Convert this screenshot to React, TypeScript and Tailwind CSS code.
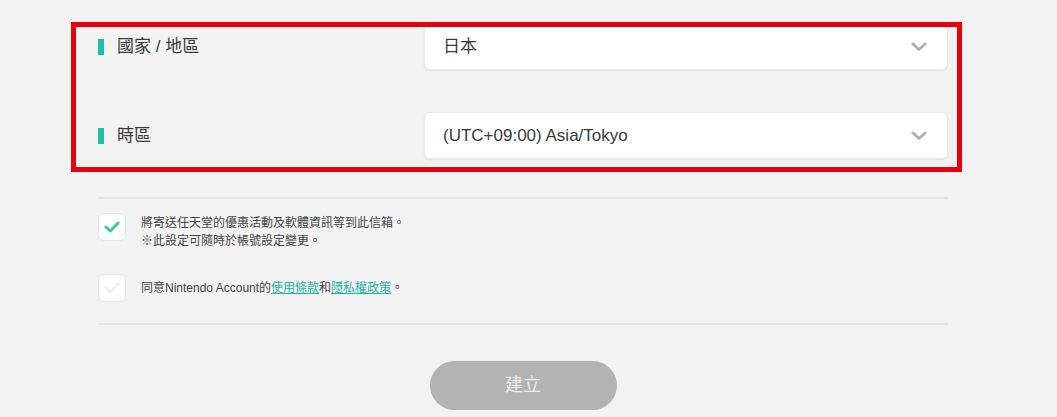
import React from "react";

const FONT = { fontFamily: '"Liberation Sans", Arial, "Noto Sans CJK TC", sans-serif' };

function Chevron() {
  return (
    <svg width="16" height="10" viewBox="0 0 16 10" className="shrink-0">
      <path d="M2 2 L8 7.5 L14 2" fill="none" stroke="#b0b0b0" strokeWidth="3" strokeLinecap="round" strokeLinejoin="round" />
    </svg>
  );
}

function FieldRow({ label, value, className = "" }: { label: string; value: string; className?: string }) {
  return (
    <div className={`flex items-center ${className}`}>
      <div className="flex w-[326px] items-center gap-[13px]">
        <span className="h-4 w-[6px] bg-[#1dbfaa]" />
        <span className="text-[17px] text-[#3a3a3a]">{label}</span>
      </div>
      <div className="flex h-[47px] flex-1 items-center justify-between rounded-md border border-[#e9e9e9] bg-white pl-[18px] pr-[20px] shadow-[0_1px_2px_rgba(0,0,0,0.08)]">
        <span className="text-[17px] text-[#3a3a3a]">{value}</span>
        <Chevron />
      </div>
    </div>
  );
}

function Checkbox({ checked }: { checked: boolean }) {
  return (
    <div className="flex h-[28px] w-[28px] shrink-0 items-center justify-center rounded-[6px] border border-[#e6e6e6] bg-white">
      <svg width="16" height="12" viewBox="0 0 16 12">
        <path
          d="M2 6 L6.2 10 L14 2"
          fill="none"
          stroke={checked ? "#3cc4b1" : "#f0f0f0"}
          strokeWidth="3"
          strokeLinecap="round"
          strokeLinejoin="round"
        />
      </svg>
    </div>
  );
}

export default function App() {
  return (
    <div className="relative h-[417px] w-full overflow-hidden bg-[#f2f2f2]" style={FONT}>
      <div className="ml-[98px] w-[850px] pt-[23px]">
        <FieldRow label="國家 / 地區" value="日本" />
        <FieldRow label="時區" value="(UTC+09:00) Asia/Tokyo" className="mt-[42px]" />

        <div className="mt-[38px] h-[2px] bg-[#e4e4e4]" />

        <div className="mt-[14px] flex items-start gap-[15px]">
          <Checkbox checked />
          <div className="pt-px text-[12px] leading-[18px] text-[#444]">
            <p>將寄送任天堂的優惠活動及軟體資訊等到此信箱。</p>
            <p>※此設定可隨時於帳號設定變更。</p>
          </div>
        </div>

        <div className="mt-[24px] flex items-center gap-[15px]">
          <Checkbox checked={false} />
          <p className="text-[12px] leading-[18px] text-[#444]">
            同意Nintendo Account的
            <span className="text-[#1fb3a6] underline">使用條款</span>和
            <span className="text-[#1fb3a6] underline">隱私權政策</span>。
          </p>
        </div>

        <div className="mt-[21px] h-[2px] bg-[#e4e4e4]" />

        <div className="mt-[36px] flex justify-center">
          <button className="flex h-[49px] w-[187px] items-center justify-center rounded-full bg-[#b3b3b3] text-[18px] text-[#ececec]">
            建立
          </button>
        </div>
      </div>

      <div className="pointer-events-none absolute left-[71px] top-[22px] h-[150px] w-[891px] border-[5px] border-[#e8000b]" />
    </div>
  );
}
